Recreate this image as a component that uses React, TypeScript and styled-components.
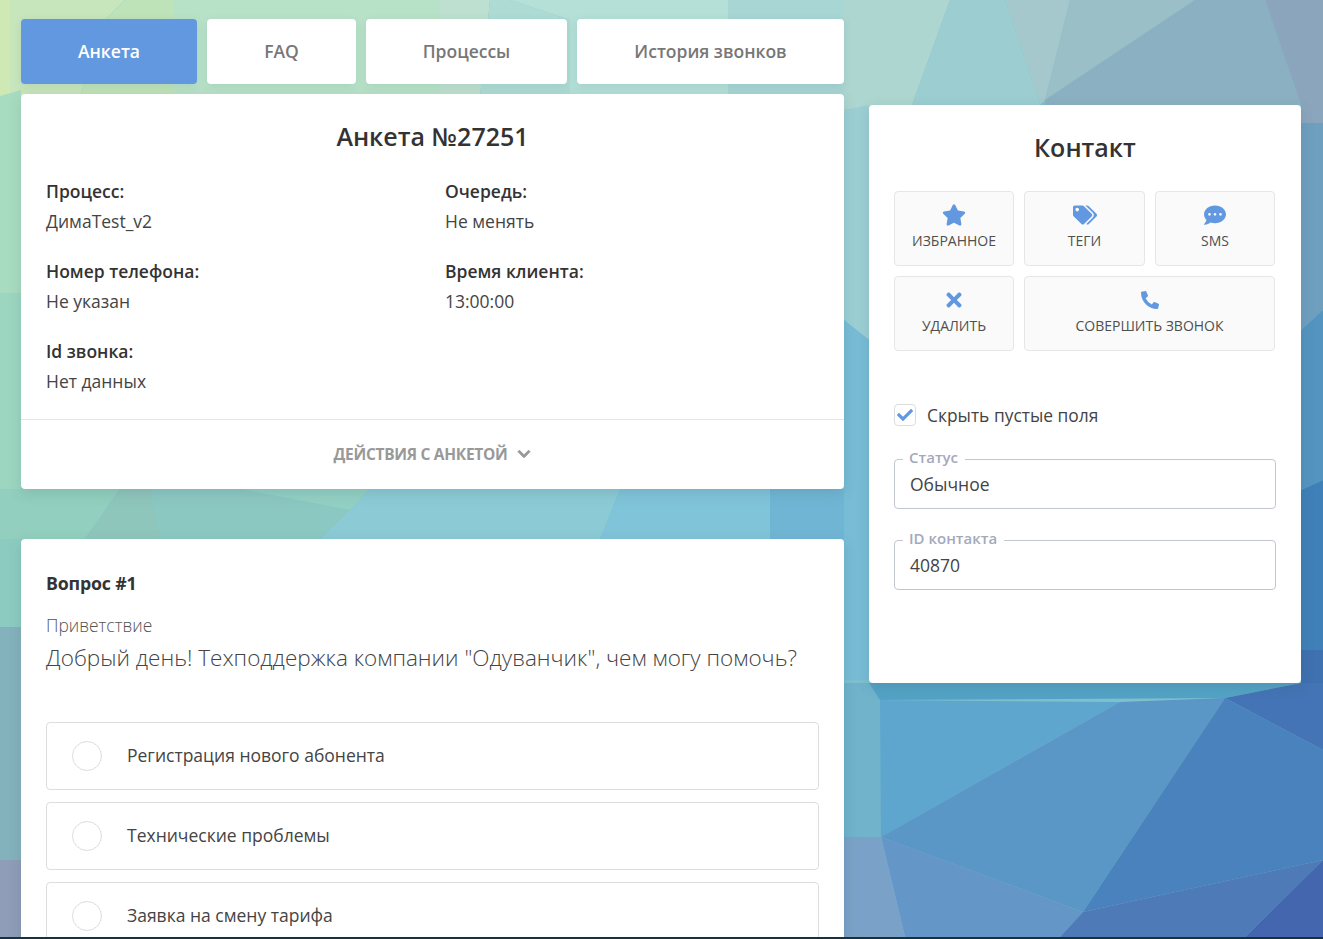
import React from "react";
import styled, { createGlobalStyle } from "styled-components";
import { FaStar, FaTags, FaCommentDots, FaTimes, FaPhoneAlt, FaChevronDown, FaCheck } from "react-icons/fa";

const GlobalStyle = createGlobalStyle`
  html, body {
    margin: 0;
    padding: 0;
    height: 939px;
    overflow: hidden;
    background: #16323f;
  }
  body {
    font-family: "Open Sans", "Noto Sans", sans-serif;
    color: #333;
  }
`;

const Page = styled.div`
  position: relative;
  height: 937px;
  overflow: hidden;
  display: flex;
  align-items: flex-start;
  gap: 25px;
  padding: 19px 22px 0 21px;
  box-sizing: border-box;
`;

const Backdrop = styled.svg`
  position: absolute;
  inset: 0;
  width: 100%;
  height: 100%;
`;

const LeftColumn = styled.div`
  position: relative;
  width: 823px;
  flex: none;
`;

const RightColumn = styled.div`
  position: relative;
  width: 432px;
  flex: none;
  margin-top: 86px;
`;

const Tabs = styled.nav`
  display: flex;
  gap: 10px;
  margin-bottom: 10px;
`;

const Tab = styled.div<{ $active?: boolean; $width: number }>`
  width: ${(p) => p.$width}px;
  height: 65px;
  box-sizing: border-box;
  padding-bottom: 2px;
  display: flex;
  align-items: center;
  justify-content: center;
  border-radius: 4px;
  font-size: 17.5px;
  font-weight: 600;
  background: ${(p) => (p.$active ? "#6298e0" : "#fff")};
  color: ${(p) => (p.$active ? "#fff" : "#777")};
  box-shadow: 0 2px 8px rgba(60, 90, 100, 0.12);
`;

const Card = styled.section`
  background: #fff;
  border-radius: 4px;
  box-shadow: 0 4px 14px rgba(50, 80, 90, 0.16);
`;

const TicketCard = styled(Card)`
  height: 395px;
  margin-bottom: 50px;
  display: flex;
  flex-direction: column;
`;

const TicketTitle = styled.h1`
  margin: 0;
  padding-top: 25px;
  height: 57px;
  box-sizing: content-box;
  font-size: 25px;
  line-height: 34px;
  font-weight: 600;
  text-align: center;
  color: #333;
`;

const InfoGrid = styled.div`
  display: grid;
  grid-template-columns: 399px 1fr;
  grid-auto-rows: 80px;
  padding: 0 25px;
  flex: 1;
`;

const InfoLabel = styled.div`
  font-size: 17.5px;
  line-height: 30px;
  font-weight: 600;
  color: #333;
`;

const InfoValue = styled.div`
  font-size: 17.5px;
  line-height: 30px;
  color: #444;
`;

const TicketFooter = styled.div`
  height: 70px;
  flex: none;
  box-sizing: border-box;
  padding-bottom: 1px;
  border-top: 1px solid #e6e6e6;
  display: flex;
  align-items: center;
  justify-content: center;
  gap: 10px;
  font-size: 15.5px;
  font-weight: 700;
  letter-spacing: -0.3px;
  color: #999;

  svg {
    font-size: 14px;
    stroke: currentColor;
    stroke-width: 30;
  }
`;

const QuestionCard = styled(Card)`
  padding: 31px 25px 0;
  height: 420px;
  box-sizing: border-box;
`;

const QuestionNumber = styled.div`
  font-size: 17.8px;
  line-height: 26px;
  font-weight: 700;
  letter-spacing: -0.2px;
  color: #333;
  margin-bottom: 16px;
`;

const QuestionGroup = styled.div`
  font-size: 17.4px;
  line-height: 26px;
  font-weight: 300;
  color: #555;
`;

const QuestionText = styled.div`
  font-size: 22.5px;
  line-height: 40px;
  font-weight: 300;
  color: #444;
  white-space: nowrap;
  margin-bottom: 44px;
`;

const Answer = styled.div`
  height: 68px;
  box-sizing: border-box;
  border: 1px solid #ddd;
  border-radius: 4px;
  margin-bottom: 12px;
  padding: 0 0 2px 25px;
  display: flex;
  align-items: center;
  gap: 25px;
  font-size: 17.5px;
  color: #444;
`;

const Radio = styled.span`
  width: 30px;
  height: 30px;
  box-sizing: border-box;
  border: 1px solid #ddd;
  border-radius: 50%;
  flex: none;
  margin-top: 2px;
`;

const ContactCard = styled(Card)`
  height: 578px;
  box-sizing: border-box;
  padding: 25px 25px 0;
`;

const ContactTitle = styled.h2`
  margin: 0 0 27px;
  font-size: 25px;
  line-height: 34px;
  font-weight: 600;
  text-align: center;
  color: #333;
`;

const ActionGrid = styled.div`
  display: grid;
  grid-template-columns: 120px 121px 120px;
  grid-auto-rows: 75px;
  gap: 10px;
  width: 381px;
  margin-bottom: 52px;
`;

const ActionButton = styled.div<{ $wide?: boolean }>`
  grid-column: ${(p) => (p.$wide ? "span 2" : "auto")};
  box-sizing: border-box;
  border: 1px solid #e6e6e6;
  border-radius: 4px;
  background: #fafafa;
  display: flex;
  flex-direction: column;
  align-items: center;
  justify-content: flex-start;
  padding-top: 12px;
  font-size: 14px;
  line-height: 20px;
  color: #4f4f4f;

  svg {
    height: 22px;
    width: 24px;
    color: #6298e0;
    margin-bottom: 5px;
  }
`;

const PhoneIcon = styled(FaPhoneAlt)`
  && {
    box-sizing: border-box;
    padding: 2px 0;
  }
`;

const CheckRow = styled.label`
  display: flex;
  align-items: center;
  gap: 11px;
  font-size: 17.4px;
  line-height: 24px;
  color: #444;
  margin-bottom: 20px;
`;

const CheckBox = styled.span`
  width: 22px;
  height: 22px;
  box-sizing: border-box;
  border: 1px solid #ddd;
  border-radius: 4px;
  display: flex;
  align-items: center;
  justify-content: center;
  color: #6298e0;
  font-size: 16px;
`;

const Field = styled.fieldset`
  margin: 0 0 19px;
  padding: 0 15px;
  width: 382px;
  height: 62px;
  box-sizing: border-box;
  border: 1px solid #c2c6cf;
  border-radius: 4px;
`;

const FieldLabel = styled.legend`
  padding: 0 7px 4px 6px;
  margin-left: -7px;
  font-size: 15px;
  line-height: 20px;
  font-weight: 600;
  color: #a3a9bd;
`;

const FieldValue = styled.div`
  font-size: 17.5px;
  line-height: 26px;
  color: #444;
`;

const polygons: [string, string][] = [
  // top strip
  ["0,0 10,0 10,96 0,96", "#cfe9b5"],
  ["10,0 125,0 105,20 80,96 10,96", "#c8e6bc"],
  ["125,0 174,0 174,96 80,96 105,20", "#bfe3b8"],
  ["174,0 440,0 440,96 174,96", "#b8e2c8"],
  ["440,0 490,0 480,96 440,96", "#bde0d0"],
  ["490,0 510,0 570,20 570,96 480,96", "#aedcd4"],
  ["510,0 728,0 728,96 570,96 570,20", "#b4e0d8"],
  ["728,0 950,0 844,96 728,96", "#a8d6d4"],
  // left edge
  ["0,96 21,90 21,293 0,293", "#a8dcc0"],
  ["0,293 21,293 21,496 0,496", "#9cd6c0"],
  ["0,496 21,489 21,627 0,627", "#8cccc0"],
  ["0,627 21,627 21,860 0,860", "#84b2bc"],
  ["0,860 21,860 21,937 0,937", "#8f9db8"],
  // gutter between the columns and top right
  ["844,0 950,0 912,105 844,110", "#aed6d0"],
  ["950,0 1005,0 1040,105 912,105", "#9ccdd0"],
  ["1005,0 1070,0 1045,100 1040,105", "#a4c8cc"],
  ["1070,0 1195,0 1045,100", "#9abfc6"],
  ["1195,0 1265,0 1301,105 1045,105 1045,100", "#8ab0c2"],
  ["1265,0 1323,0 1323,123 1301,123 1301,105", "#8ba6bc"],
  ["844,110 869,105 869,340 844,320", "#9ccfd4"],
  ["844,320 869,340 869,680 844,680", "#78bcd6"],
  // right edge
  ["1301,123 1323,123 1323,310 1301,330", "#6f9fbf"],
  ["1301,330 1323,310 1323,480 1301,490", "#5494c0"],
  ["1301,490 1323,480 1323,650 1301,650", "#3f80b8"],
  ["1301,650 1323,650 1323,700 1301,690", "#3f70b0"],
  // strip between the two left cards
  ["0,489 120,489 85,539 0,539", "#92cfbe"],
  ["120,489 150,489 160,539 85,539", "#8fc6bc"],
  ["150,489 240,489 350,510 320,539 160,539", "#8cc8c2"],
  ["240,489 370,489 350,510", "#93d0c4"],
  ["370,489 620,489 600,539 320,539 350,510", "#8ccbd6"],
  ["620,489 844,489 844,539 600,539", "#80c4da"],
  ["770,489 844,489 844,539 770,539", "#70b6d4"],
  // lower right
  ["844,683 869,683 881,700 881,837 844,837", "#70b3cb"],
  ["869,683 1301,683 1225,698 880,700", "#53a3c6"],
  ["880,700 1120,702 881,837", "#5fa6cf"],
  ["1120,702 1225,698 1083,912 881,837", "#5a96c6"],
  ["1225,698 1323,750 1323,860 1083,912", "#4a82bd"],
  ["1225,698 1301,683 1323,683 1323,750", "#4474b5"],
  ["881,837 1083,912 1060,937 905,937", "#6496c8"],
  ["844,837 881,837 905,937 844,937", "#7aa2c8"],
  ["1083,912 1323,860 1245,937 1060,937", "#4f7ab8"],
  ["1323,860 1323,937 1245,937", "#4366ae"],
];

const info = [
  ["Процесс:", "ДимаTest_v2"],
  ["Очередь:", "Не менять"],
  ["Номер телефона:", "Не указан"],
  ["Время клиента:", "13:00:00"],
  ["Id звонка:", "Нет данных"],
];

const answers = ["Регистрация нового абонента", "Технические проблемы", "Заявка на смену тарифа"];

export default function App() {
  return (
    <>
      <GlobalStyle />
      <Page>
        <Backdrop viewBox="0 0 1323 937" preserveAspectRatio="none">
          <rect width="1323" height="937" fill="#7fc0cf" />
          {polygons.map(([points, fill]) => (
            <polygon key={points} points={points} fill={fill} />
          ))}
        </Backdrop>

        <LeftColumn>
          <Tabs>
            <Tab $active $width={176}>Анкета</Tab>
            <Tab $width={149}>FAQ</Tab>
            <Tab $width={201}>Процессы</Tab>
            <Tab $width={267}>История звонков</Tab>
          </Tabs>

          <TicketCard>
            <TicketTitle>Анкета №27251</TicketTitle>
            <InfoGrid>
              {info.map(([label, value]) => (
                <div key={label}>
                  <InfoLabel>{label}</InfoLabel>
                  <InfoValue>{value}</InfoValue>
                </div>
              ))}
            </InfoGrid>
            <TicketFooter>
              ДЕЙСТВИЯ С АНКЕТОЙ <FaChevronDown />
            </TicketFooter>
          </TicketCard>

          <QuestionCard>
            <QuestionNumber>Вопрос #1</QuestionNumber>
            <QuestionGroup>Приветствие</QuestionGroup>
            <QuestionText>Добрый день! Техподдержка компании "Одуванчик", чем могу помочь?</QuestionText>
            {answers.map((a) => (
              <Answer key={a}>
                <Radio />
                {a}
              </Answer>
            ))}
          </QuestionCard>
        </LeftColumn>

        <RightColumn>
          <ContactCard>
            <ContactTitle>Контакт</ContactTitle>
            <ActionGrid>
              <ActionButton><FaStar />ИЗБРАННОЕ</ActionButton>
              <ActionButton><FaTags />ТЕГИ</ActionButton>
              <ActionButton><FaCommentDots />SMS</ActionButton>
              <ActionButton><FaTimes />УДАЛИТЬ</ActionButton>
              <ActionButton $wide><PhoneIcon />СОВЕРШИТЬ ЗВОНОК</ActionButton>
            </ActionGrid>

            <CheckRow>
              <CheckBox><FaCheck /></CheckBox>
              Скрыть пустые поля
            </CheckRow>

            <Field>
              <FieldLabel>Статус</FieldLabel>
              <FieldValue>Обычное</FieldValue>
            </Field>
            <Field>
              <FieldLabel>ID контакта</FieldLabel>
              <FieldValue>40870</FieldValue>
            </Field>
          </ContactCard>
        </RightColumn>
      </Page>
    </>
  );
}
